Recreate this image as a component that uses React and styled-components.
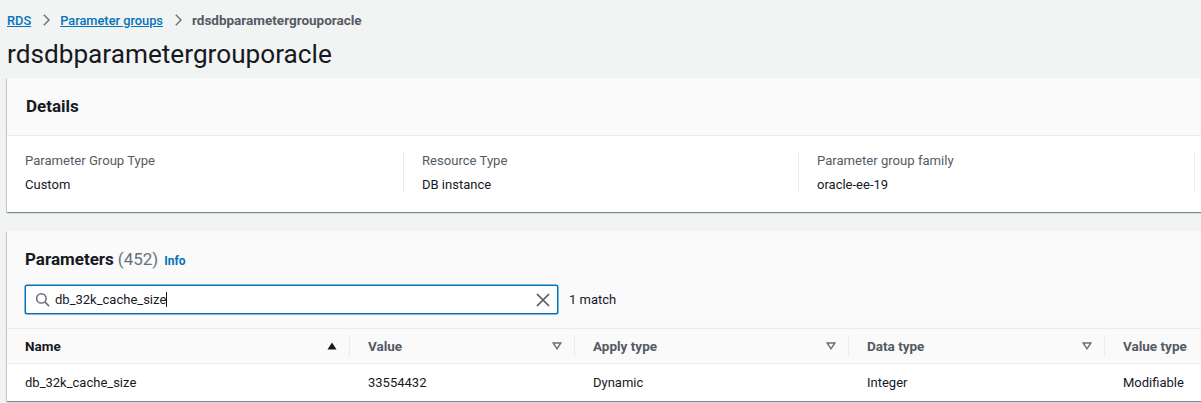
import React from 'react';
import styled, { createGlobalStyle } from 'styled-components';

const GlobalStyle = createGlobalStyle`
  html, body {
    margin: 0;
    padding: 0;
    height: 403px;
    overflow: hidden;
    background: #f2f3f3;
    font-family: Roboto, "Noto Sans", Arial, sans-serif;
    color: #16191f;
  }
  * { box-sizing: border-box; }
`;

const Chevron = () => (
  <svg width="7" height="12" viewBox="0 0 7 12" fill="none">
    <path d="M.8.8 6 6 .8 11.2" stroke="#687078" strokeWidth="1.4" />
  </svg>
);

const SearchIcon = () => (
  <svg width="15" height="15" viewBox="0 0 16 16" fill="none">
    <circle cx="6.8" cy="6.8" r="5" stroke="#687078" strokeWidth="1.7" />
    <path d="m10.5 10.5 4.5 4.5" stroke="#687078" strokeWidth="1.7" />
  </svg>
);

const ClearIcon = () => (
  <svg width="14" height="14" viewBox="0 0 14 14" fill="none">
    <path d="m1 1 12 12M13 1 1 13" stroke="#545b64" strokeWidth="1.7" />
  </svg>
);

const SortIcon = ({ active }) => (
  <svg width="10" height="8" viewBox="0 0 10 8">
    {active ? (
      <path d="M0.5 7.5h9L5 0.5z" fill="#16191f" />
    ) : (
      <path d="M1.2 1h7.6L5 6.8z" fill="none" stroke="#687078" strokeWidth="1.4" />
    )}
  </svg>
);

const Page = styled.div`
  width: 1201px;
  height: 403px;
  overflow: hidden;
  padding-left: 7px;
`;

const Breadcrumbs = styled.nav`
  height: 41px;
  display: flex;
  align-items: center;
  font-size: 12.8px;
  font-weight: 500;
  padding-bottom: 1px;
`;

const Crumb = styled.a`
  color: #0073bb;
  text-decoration: underline;
`;

const CurrentCrumb = styled.span`
  color: #545b64;
  font-size: 13.5px;
  font-weight: 700;
`;

const Separator = styled.span`
  display: flex;
  margin: 0 10px 0 12px;
`;

const Title = styled.h1`
  margin: 0;
  height: 37px;
  font-size: 26.2px;
  line-height: 26px;
  font-weight: 400;
`;

const Card = styled.section`
  width: 1240px;
  background: #fff;
  box-shadow: 0 1px 1px 0 rgba(0, 28, 36, 0.3), 1px 1px 1px 0 rgba(0, 28, 36, 0.15), -1px 1px 1px 0 rgba(0, 28, 36, 0.15);
  margin-bottom: 19px;
`;

const DetailsHeader = styled.header`
  height: 58px;
  padding: 0 18px 2px 19px;
  display: flex;
  align-items: center;
  background: #fafafa;
  border-bottom: 1px solid #eaeded;
`;

const CardTitle = styled.h2`
  margin: 0;
  font-size: 17px;
  font-weight: 700;
  line-height: 20px;
`;

const DetailsBody = styled.div`
  height: 76px;
  padding-top: 16px;
  display: grid;
  grid-template-columns: 397px 395px 396px 1fr;
`;

const Detail = styled.div`
  height: 40px;
  padding-left: 18px;
  border-right: 1px solid #eaeded;
  &:last-child { border-right: none; }
`;

const DetailLabel = styled.div`
  font-size: 13.1px;
  line-height: 18px;
  color: #545b64;
  margin-bottom: 6px;
`;

const DetailValue = styled.div`
  font-size: 13px;
  line-height: 18px;
`;

const ParamsHeader = styled.header`
  height: 97px;
  padding: 18px 18px 0;
  background: #fafafa;
`;

const ParamsTitleRow = styled.div`
  display: flex;
  align-items: baseline;
  height: 20px;
  margin-bottom: 16px;
`;

const Count = styled.span`
  font-size: 17px;
  color: #687078;
  margin-left: 4px;
`;

const InfoLink = styled.a`
  font-size: 12px;
  font-weight: 700;
  color: #0073bb;
  margin-left: 6px;
`;

const SearchRow = styled.div`
  display: flex;
  align-items: center;
`;

const SearchBox = styled.div`
  width: 533px;
  height: 29px;
  display: flex;
  align-items: center;
  padding: 0 7px 0 9px;
  background: #fff;
  border: 1px solid #0073bb;
  border-radius: 2px;
  box-shadow: 0 0 0 0.5px #0073bb;
`;

const SearchText = styled.span`
  flex: 1;
  margin-left: 5px;
  font-size: 13px;
  line-height: 18px;
`;

const Caret = styled.span`
  display: inline-block;
  width: 1px;
  height: 15px;
  background: #16191f;
  vertical-align: -3px;
`;

const MatchCount = styled.span`
  margin-left: 11px;
  font-size: 13px;
  color: #16191f;
`;

const columns = '343px 225px 274px 256px 1fr';

const HeadRow = styled.div`
  display: grid;
  grid-template-columns: ${columns};
  height: 36px;
  align-items: center;
  background: #fafafa;
  border-top: 1px solid #eaeded;
  border-bottom: 1px solid #eaeded;
`;

const HeadCell = styled.div`
  height: 22px;
  display: flex;
  align-items: center;
  justify-content: space-between;
  padding: 0 12px 0 18px;
  font-size: 13.5px;
  font-weight: 700;
  color: ${({ $active }) => ($active ? '#16191f' : '#545b64')};
  border-right: 1px solid #eaeded;
  &:last-child { border-right: none; }
`;

const BodyRow = styled.div`
  display: grid;
  grid-template-columns: ${columns};
  height: 37px;
  padding-bottom: 1px;
  align-items: center;
`;

const BodyCell = styled.div`
  padding-left: 18px;
  font-size: 13px;
`;

const details = [
  ['Parameter Group Type', 'Custom'],
  ['Resource Type', 'DB instance'],
  ['Parameter group family', 'oracle-ee-19'],
];

const heads = ['Name', 'Value', 'Apply type', 'Data type', 'Value type'];
const cells = ['db_32k_cache_size', '33554432', 'Dynamic', 'Integer', 'Modifiable'];

export default function App() {
  return (
    <Page>
      <GlobalStyle />
      <Breadcrumbs>
        <Crumb>RDS</Crumb>
        <Separator><Chevron /></Separator>
        <Crumb>Parameter groups</Crumb>
        <Separator><Chevron /></Separator>
        <CurrentCrumb>rdsdbparametergrouporacle</CurrentCrumb>
      </Breadcrumbs>
      <Title>rdsdbparametergrouporacle</Title>

      <Card>
        <DetailsHeader>
          <CardTitle>Details</CardTitle>
        </DetailsHeader>
        <DetailsBody>
          {details.map(([label, value]) => (
            <Detail key={label}>
              <DetailLabel>{label}</DetailLabel>
              <DetailValue>{value}</DetailValue>
            </Detail>
          ))}
          <Detail />
        </DetailsBody>
      </Card>

      <Card>
        <ParamsHeader>
          <ParamsTitleRow>
            <CardTitle>Parameters</CardTitle>
            <Count>(452)</Count>
            <InfoLink>Info</InfoLink>
          </ParamsTitleRow>
          <SearchRow>
            <SearchBox>
              <SearchIcon />
              <SearchText>db_32k_cache_size<Caret /></SearchText>
              <ClearIcon />
            </SearchBox>
            <MatchCount>1 match</MatchCount>
          </SearchRow>
        </ParamsHeader>
        <HeadRow>
          {heads.map((head, i) => (
            <HeadCell key={head} $active={i === 0}>
              {head}
              {i < 4 && <SortIcon active={i === 0} />}
            </HeadCell>
          ))}
        </HeadRow>
        <BodyRow>
          {cells.map((cell) => (
            <BodyCell key={cell}>{cell}</BodyCell>
          ))}
        </BodyRow>
      </Card>
    </Page>
  );
}
